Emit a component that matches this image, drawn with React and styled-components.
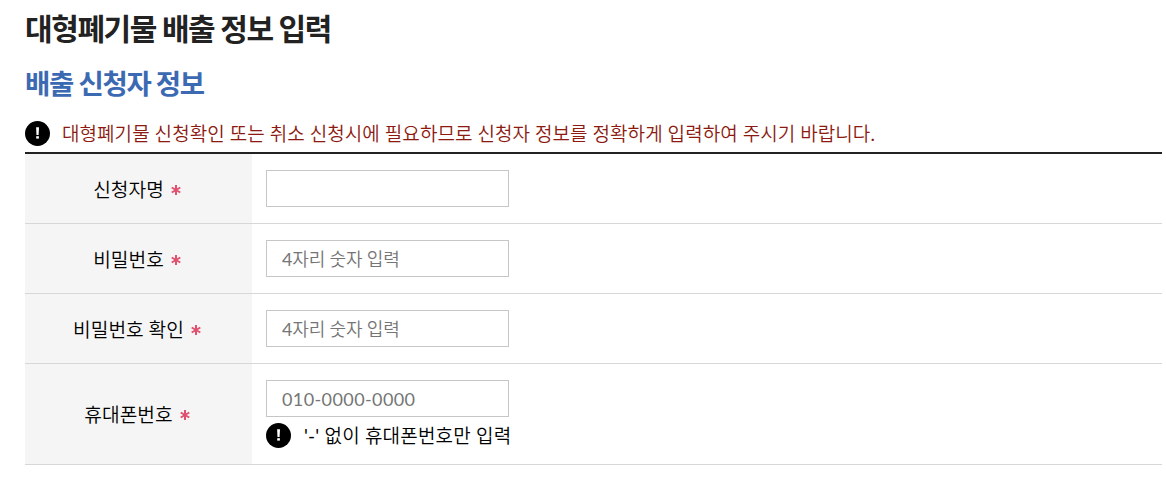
import React from "react";
import styled, { createGlobalStyle } from "styled-components";

const fields = [
  { id: "name", label: "신청자명", type: "text" },
  { id: "password", label: "비밀번호", type: "password", placeholder: "4자리 숫자 입력" },
  { id: "passwordCheck", label: "비밀번호 확인", type: "password", placeholder: "4자리 숫자 입력" },
  {
    id: "phone",
    label: "휴대폰번호",
    type: "text",
    placeholder: "010-0000-0000",
    spacing: "0.4px",
    hint: "'-' 없이 휴대폰번호만 입력",
  },
];

function NoticeIcon() {
  return (
    <StyledIcon viewBox="0 0 25 25" aria-hidden="true">
      <circle cx="12.5" cy="12.5" r="12.5" fill="#000" />
      <path d="M11.1 6.2h2.9l-.4 7.8h-2.1z" fill="#fff" />
      <rect x="11.2" y="15.2" width="2.7" height="2.4" fill="#fff" />
    </StyledIcon>
  );
}

function RequiredMark() {
  return (
    <StyledRequired viewBox="0 0 10 10" aria-label="필수">
      <path d="M5 0v10M.7 2.5l8.6 5M.7 7.5l8.6-5" stroke="#e0506f" strokeWidth="2" />
    </StyledRequired>
  );
}

export default function App() {
  return (
    <StyledContainer>
      <GlobalStyle />
      <StyledTitle>대형폐기물 배출 정보 입력</StyledTitle>
      <StyledSubtitle>배출 신청자 정보</StyledSubtitle>
      <StyledNotice $warning>
        <NoticeIcon />
        <span>
          대형폐기물 신청확인 또는 취소 신청시에 필요하므로 신청자 정보를 정확하게 입력하여 주시기 바랍니다.
        </span>
      </StyledNotice>
      <StyledForm>
        {fields.map((field) => (
          <StyledRow key={field.id}>
            <StyledLabel htmlFor={field.id}>
              <span>{field.label}</span>
              <RequiredMark />
            </StyledLabel>
            <StyledCell>
              <StyledInput
                id={field.id}
                type={field.type}
                placeholder={field.placeholder}
                $spacing={field.spacing}
              />
              {field.hint && (
                <StyledNotice>
                  <NoticeIcon />
                  <span>{field.hint}</span>
                </StyledNotice>
              )}
            </StyledCell>
          </StyledRow>
        ))}
      </StyledForm>
    </StyledContainer>
  );
}

const GlobalStyle = createGlobalStyle`
  * {
    box-sizing: border-box;
  }
  body {
    margin: 0;
    background: #fff;
    color: #000;
    font-family: Lato, "Noto Sans CJK KR DemiLight", "Noto Sans CJK KR", sans-serif;
    font-size: 19px;
    font-weight: 400;
  }
`;

const StyledContainer = styled.div`
  padding: 8px 4px 0 25px;
  white-space: nowrap;
`;

const StyledTitle = styled.h1`
  margin: 0;
  height: 40px;
  line-height: 40px;
  font-family: Lato, "Noto Sans CJK KR", sans-serif;
  font-size: 30px;
  font-weight: 700;
  letter-spacing: -1.4px;
  color: #222;
`;

const StyledSubtitle = styled.h2`
  margin: 16px 0 0;
  height: 38px;
  line-height: 40px;
  font-family: Lato, "Noto Sans CJK KR", sans-serif;
  font-size: 27.5px;
  font-weight: 700;
  letter-spacing: -1.3px;
  color: #3c6ab2;
`;

const StyledNotice = styled.div`
  display: flex;
  align-items: center;
  gap: ${(props) => (props.$warning ? "12px" : "13px")};
  height: 26px;
  line-height: 26px;
  margin-top: ${(props) => (props.$warning ? "18px" : "5px")};
  letter-spacing: ${(props) => (props.$warning ? "0.06px" : "0.2px")};
  color: ${(props) => (props.$warning ? "#8c1a10" : "#000")};
  span {
    padding-top: 2px;
  }
`;

const StyledIcon = styled.svg`
  width: 25px;
  height: 25px;
  flex: none;
`;

const StyledForm = styled.form`
  margin-top: 6px;
  border-top: 2px solid #222;
`;

const StyledRow = styled.div`
  display: flex;
  border-bottom: 1px solid #d7d7d7;
`;

const StyledLabel = styled.label`
  display: flex;
  align-items: center;
  justify-content: center;
  gap: 7px;
  width: 227px;
  padding-right: 3px;
  background: #f5f5f5;
  font-size: 19.2px;
`;

const StyledRequired = styled.svg`
  width: 10px;
  height: 10px;
  margin-top: 2px;
`;

const StyledCell = styled.div`
  padding: 16px 14px;
`;

const StyledInput = styled.input`
  display: block;
  width: 243px;
  height: 37px;
  padding: 0 15px;
  border: 1px solid #c6c6c6;
  border-radius: 0;
  background: #fff;
  font: inherit;
  font-size: 18px;
  letter-spacing: ${(props) => props.$spacing || "-0.15px"};
  outline: none;
  &::placeholder {
    color: #757575;
    opacity: 1;
  }
`;
